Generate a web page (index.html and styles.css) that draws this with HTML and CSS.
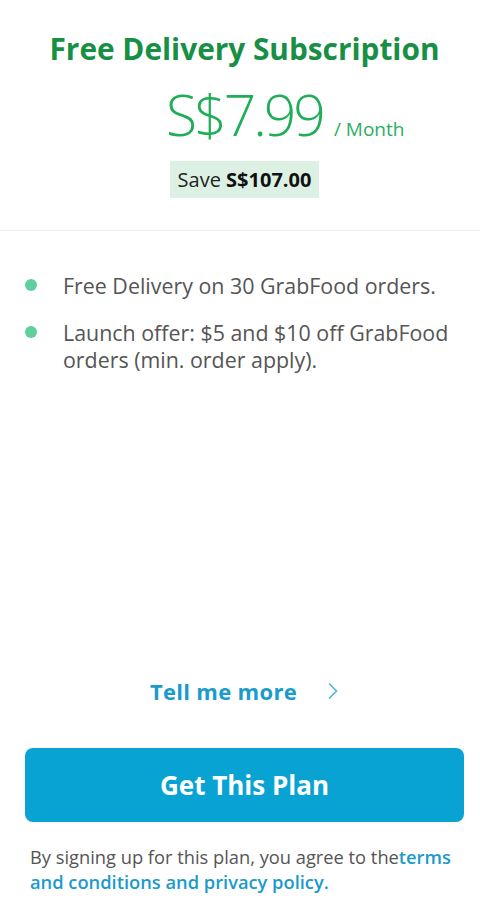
FILE: index.html
```html
<!DOCTYPE html>
<html lang="en">
<head>
  <meta charset="UTF-8" />
  <meta name="viewport" content="width=device-width, initial-scale=1.0"/>
  <title>Free Delivery Subscription</title>
  <link rel="stylesheet" href="styles.css">
</head>
<body>

  <header class="plan-head">
    <h1>Free Delivery Subscription</h1>
    <div class="price-row">
      <span class="price">S$7.99</span>
      <span class="per">/ Month</span>
    </div>
    <div class="save">Save <b>S$107.00</b></div>
  </header>

  <ul class="perks">
    <li>Free Delivery on 30 GrabFood orders.</li>
    <li>Launch offer: $5 and $10 off GrabFood orders (min. order apply).</li>
  </ul>

  <a class="more" href="#">
    Tell me more
    <svg width="12" height="18" viewBox="0 0 12 18"><path d="M2 1.5 L9.5 9 L2 16.5" fill="none" stroke="#52b3da" stroke-width="1.6"/></svg>
  </a>

  <button class="cta">Get This Plan</button>

  <p class="terms">By signing up for this plan, you agree to the<a href="#">terms and conditions and privacy policy.</a></p>

</body>
</html>
```

FILE: styles.css
```css
* { box-sizing: border-box; }
html, body {
  margin: 0; padding: 0;
  width: 100vw; height: 100vh;
  overflow: hidden;
  font-family: 'Open Sans', 'Noto Sans', sans-serif;
  background-color: #fff;
  color: #555;
}
body {
  display: flex;
  flex-direction: column;
}
.plan-head {
  padding: 29px 16px 32px 25px;
  border-bottom: 1px solid #ececec;
  display: flex;
  flex-direction: column;
  align-items: center;
}
h1 {
  margin: 0;
  font-size: 29.8px;
  line-height: 40px;
  font-weight: 700;
  color: #178f45;
  white-space: nowrap;
}
.price-row {
  width: 100%;
  margin-top: 16px;
  display: grid;
  grid-template-columns: 1fr auto 1fr;
  align-items: baseline;
}
.price {
  grid-column: 2;
  font-size: 57px;
  line-height: 58px;
  font-weight: 300;
  color: #1fae57;
  letter-spacing: -3px;
}
.per {
  margin-left: 11px;
  font-size: 19px;
  color: #2aaf62;
}
.save {
  margin-top: 18px;
  padding: 0 8px;
  height: 37px;
  line-height: 37px;
  background: #dcf1e4;
  font-size: 20px;
  color: #222;
}
.save b { color: #111; }
.perks {
  list-style: none;
  margin: 0;
  padding: 41px 10px 0 63px;
  flex-grow: 1;
}
.perks li {
  position: relative;
  font-size: 21.4px;
  line-height: 27px;
  color: #555;
  margin-bottom: 20px;
}
.perks li::before {
  content: "";
  position: absolute;
  left: -38px;
  top: 7px;
  width: 12px;
  height: 12px;
  border-radius: 50%;
  background: #5fd09d;
}
.more {
  align-self: center;
  margin-left: 9px;
  display: flex;
  align-items: center;
  gap: 30px;
  height: 30px;
  font-size: 22px;
  letter-spacing: 0.3px;
  font-weight: 700;
  color: #1a9bcb;
  text-decoration: none;
}
.cta {
  margin: 42px 16px 0 25px;
  height: 74px;
  border: none;
  border-radius: 8px;
  background: #08a3d3;
  color: #fff;
  font-family: inherit;
  font-size: 26px;
  font-weight: 700;
}
.terms {
  margin: 22px 12px 25px 30px;
  font-size: 18.3px;
  line-height: 25px;
  color: #555;
}
.terms a {
  color: #1a9bcb;
  font-weight: 600;
  text-decoration: none;
}
```
